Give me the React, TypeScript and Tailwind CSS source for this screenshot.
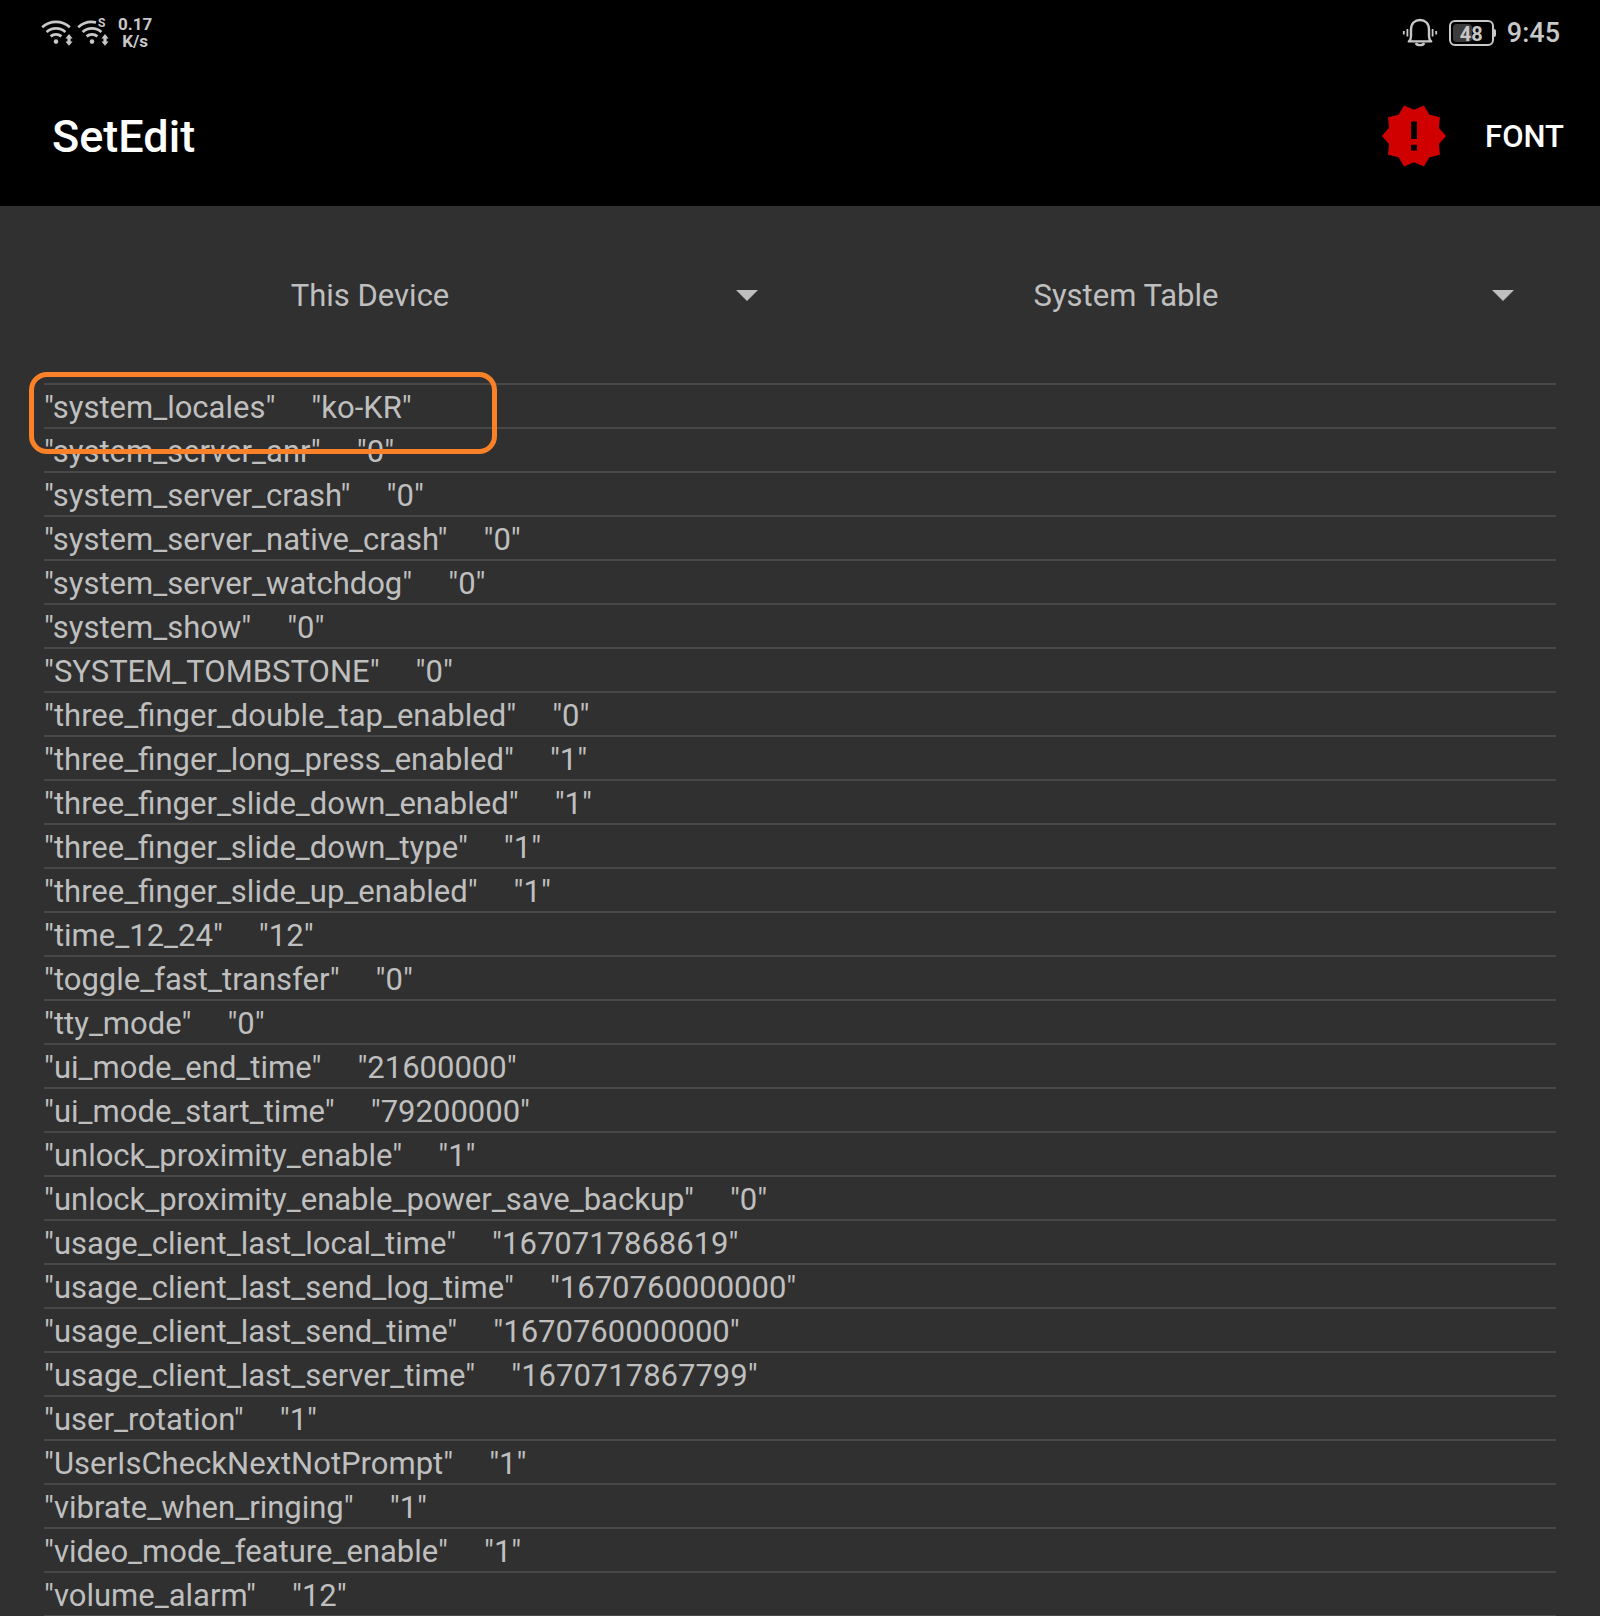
import { useState } from "react";

const settings: [string, string][] = [
  ["system_locales", "ko-KR"],
  ["system_server_anr", "0"],
  ["system_server_crash", "0"],
  ["system_server_native_crash", "0"],
  ["system_server_watchdog", "0"],
  ["system_show", "0"],
  ["SYSTEM_TOMBSTONE", "0"],
  ["three_finger_double_tap_enabled", "0"],
  ["three_finger_long_press_enabled", "1"],
  ["three_finger_slide_down_enabled", "1"],
  ["three_finger_slide_down_type", "1"],
  ["three_finger_slide_up_enabled", "1"],
  ["time_12_24", "12"],
  ["toggle_fast_transfer", "0"],
  ["tty_mode", "0"],
  ["ui_mode_end_time", "21600000"],
  ["ui_mode_start_time", "79200000"],
  ["unlock_proximity_enable", "1"],
  ["unlock_proximity_enable_power_save_backup", "0"],
  ["usage_client_last_local_time", "1670717868619"],
  ["usage_client_last_send_log_time", "1670760000000"],
  ["usage_client_last_send_time", "1670760000000"],
  ["usage_client_last_server_time", "1670717867799"],
  ["user_rotation", "1"],
  ["UserIsCheckNextNotPrompt", "1"],
  ["vibrate_when_ringing", "1"],
  ["video_mode_feature_enable", "1"],
  ["volume_alarm", "12"],
];

function WifiIcon({ secondary = false }: { secondary?: boolean }) {
  return (
    <svg viewBox="0 0 36 32" className="h-8 w-9" fill="none" stroke="currentColor" strokeWidth="2.8" aria-hidden="true">
      <path d={secondary ? "M2.2 10.2A20.5 20.5 0 0 1 20 5.4" : "M2.2 10.2A20.5 20.5 0 0 1 29.8 10.2"} />
      <path d="M6.6 15A14 14 0 0 1 25.4 15" />
      <path d="M10.6 19.4A8.5 8.5 0 0 1 21.4 19.4" />
      <circle cx="16" cy="24.6" r="2.3" fill="currentColor" stroke="none" />
      <path d="M29 17l3.6 4.4h-2v3h2L29 28.8l-3.6-4.4h2v-3h-2z" fill="currentColor" stroke="none" />
      {secondary && (
        <text x="22" y="10" fill="currentColor" stroke="none" className="text-[12px] font-bold">
          S
        </text>
      )}
    </svg>
  );
}

function BellIcon() {
  return (
    <svg viewBox="0 0 36 30" className="h-[30px] w-9" fill="none" stroke="currentColor" strokeWidth="2.4" aria-hidden="true">
      <path d="M6.8 23.4C8.4 22.1 9 20.6 9 18.2V11.4C9 5.6 12.8 2 18 2S27 5.6 27 11.4V18.2C27 20.6 27.6 22.1 29.2 23.4Z" strokeLinejoin="round" />
      <path d="M13.8 25C14.8 27.8 21.2 27.8 22.2 25" />
      <path d="M5.4 11v7.4M30.6 11v7.4" strokeWidth="1.8" />
      <path d="M1.8 13v3.6M34.2 13v3.6" strokeWidth="1.8" />
    </svg>
  );
}

function Battery() {
  return (
    <div className="flex items-center">
      <div className="relative flex h-[26px] w-[45px] items-center justify-center rounded-md border-2 border-[#c8c8c8]">
        <div className="absolute inset-y-0.5 left-0.5 w-[19px] rounded-sm bg-[#3c3c3c]" />
        <span className="relative pt-0.5 text-[20px] leading-5 font-bold">48</span>
      </div>
      <div className="h-2 w-0.5 rounded-r-sm bg-[#c8c8c8]" />
    </div>
  );
}

function Spinner({ label, options }: { label: string; options: string[] }) {
  const [value, setValue] = useState(options[0]);
  return (
    <div className="relative">
      <select
        aria-label={label}
        value={value}
        onChange={(e) => setValue(e.target.value)}
        className="block h-16 w-full appearance-none bg-transparent pt-0.5 pr-[104px] text-center text-[31px] outline-none [text-align-last:center]"
      >
        {options.map((o) => (
          <option key={o} className="bg-[#303030]">
            {o}
          </option>
        ))}
      </select>
      <svg viewBox="0 0 22 11" className="pointer-events-none absolute inset-y-0 right-[42px] my-auto h-[11px] w-[22px]" fill="currentColor" aria-hidden="true">
        <path d="M0 0h22L11 11z" />
      </svg>
    </div>
  );
}

export default function App() {
  return (
    <div className="flex h-screen flex-col overflow-hidden bg-[#303030] font-['Roboto',sans-serif] text-[#bfbfbf]">
      <header className="bg-black">
        <div className="flex h-[66px] items-center justify-between px-10 text-[#c8c8c8]">
          <div className="flex items-center">
            <WifiIcon />
            <WifiIcon secondary />
            <p className="ml-1.5 text-center text-[17px] leading-[17px] font-bold">
              <span className="block">0.17</span>
              <span className="block">K/s</span>
            </p>
          </div>
          <div className="flex items-center gap-[11px]">
            <BellIcon />
            <Battery />
            <time className="text-[27px] leading-8 font-medium">9:45</time>
          </div>
        </div>
        <div className="flex h-[140px] items-start justify-between pt-[35px] pr-9 pl-[52px] text-white">
          <h1 className="text-[45px] leading-[72px] font-medium">SetEdit</h1>
          <div className="flex items-center gap-9">
            <button type="button" aria-label="Important notice" className="pb-0.5 text-[#d10000]">
              <svg viewBox="0 0 24 24" className="size-[70px]" fill="currentColor" aria-hidden="true">
                <path d="M23 12l-2.44-2.78.34-3.68-3.61-.82-1.89-3.18L12 3 8.6 1.54 6.71 4.72l-3.61.81.34 3.68L1 12l2.44 2.78-.34 3.69 3.61.82 1.89 3.18L12 21l3.4 1.46 1.89-3.18 3.61-.82-.34-3.68L23 12zm-10 5h-2v-2h2v2zm0-4h-2V7h2v6z" />
              </svg>
            </button>
            <button type="button" className="text-[31px] leading-10 font-medium">
              FONT
            </button>
          </div>
        </div>
      </header>

      <main className="min-h-0 flex-1 overflow-hidden px-11">
        <div className="grid h-[177px] grid-cols-2 items-center pt-0.5">
          <Spinner label="Device" options={["This Device"]} />
          <Spinner label="Table" options={["System Table", "Secure Table", "Global Table"]} />
        </div>
        <div className="relative">
          <ul className="border-t-2 border-[#484848] text-[31px] leading-[38px]">
            {settings.map(([key, value]) => (
              <li key={key} className="flex gap-9 border-b-2 border-[#484848] pt-1 whitespace-nowrap">
                <span>"{key}"</span>
                <span>"{value}"</span>
              </li>
            ))}
          </ul>
          <div className="pointer-events-none absolute -top-[11px] -left-[15px] h-[82px] w-[468px] rounded-[18px] border-5 border-[#fb8128]" />
        </div>
      </main>
    </div>
  );
}
